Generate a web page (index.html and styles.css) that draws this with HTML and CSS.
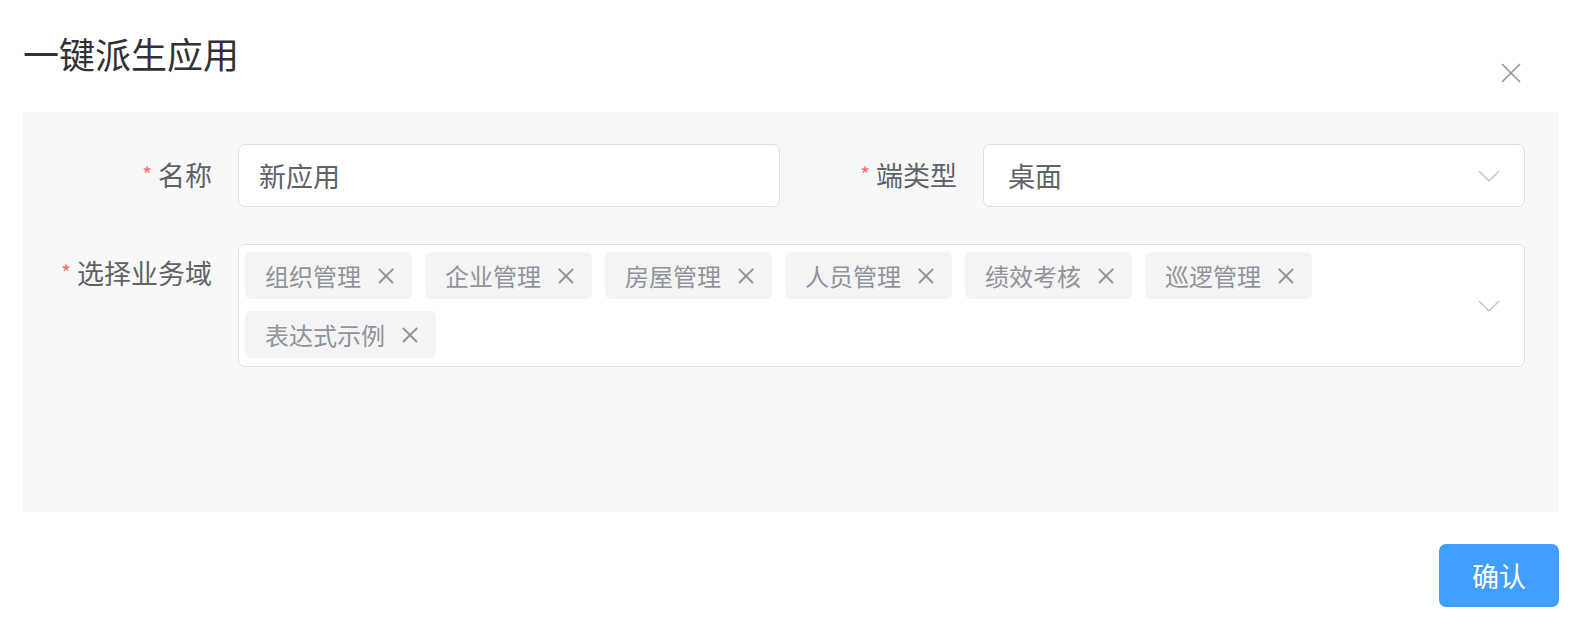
FILE: index.html
```html
<!DOCTYPE html>
<html>
<head>
  <meta charset="UTF-8">
  <title>一键派生应用</title>
  <link rel="stylesheet" href="styles.css">
</head>
<body>
  <div class="dialog">
    <header class="dialog-header">
      <h1 class="dialog-title">一键派生应用</h1>
      <button class="close-btn" aria-label="关闭">
        <svg width="20" height="20" viewBox="0 0 20 20"><path d="M1 1 L19 19 M19 1 L1 19" stroke="#909399" stroke-width="1.6" fill="none"/></svg>
      </button>
    </header>

    <main class="form-panel">
      <div class="form-row">
        <div class="form-item">
          <label class="form-label"><span class="req">*</span>名称</label>
          <div class="input">新应用</div>
        </div>
        <div class="form-item">
          <label class="form-label"><span class="req">*</span>端类型</label>
          <div class="input select">
            <span>桌面</span>
            <svg class="chevron" width="22" height="12" viewBox="0 0 22 12"><path d="M1 1 L11 11 L21 1" stroke="#c0c4cc" stroke-width="1.5" fill="none"/></svg>
          </div>
        </div>
      </div>

      <div class="form-row">
        <div class="form-item wide">
          <label class="form-label compact"><span class="req">*</span>选择业务域</label>
          <div class="multi-select">
            <div class="tags">
              <span class="tag">组织管理<i class="tag-close"></i></span>
              <span class="tag">企业管理<i class="tag-close"></i></span>
              <span class="tag">房屋管理<i class="tag-close"></i></span>
              <span class="tag">人员管理<i class="tag-close"></i></span>
              <span class="tag">绩效考核<i class="tag-close"></i></span>
              <span class="tag">巡逻管理<i class="tag-close"></i></span>
              <span class="tag">表达式示例<i class="tag-close"></i></span>
            </div>
            <svg class="chevron" width="22" height="12" viewBox="0 0 22 12"><path d="M1 1 L11 11 L21 1" stroke="#c0c4cc" stroke-width="1.5" fill="none"/></svg>
          </div>
        </div>
      </div>
    </main>

    <footer class="dialog-footer">
      <button class="btn-primary">确认</button>
    </footer>
  </div>
</body>
</html>
```

FILE: styles.css
```css
body {
  margin: 0;
  padding: 0;
  background-color: #fff;
  font-family: "Noto Sans CJK SC", "Noto Sans", sans-serif;
  color: #606266;
}

.dialog {
  padding: 0 27px 0 23px;
}

.dialog-header {
  display: flex;
  justify-content: space-between;
  align-items: flex-start;
  height: 112px;
}

.dialog-title {
  margin: 28px 0 0 0;
  font-size: 36px;
  line-height: 50px;
  font-weight: 400;
  color: #303133;
}

.close-btn {
  margin: 63px 38px 0 0;
  padding: 0;
  width: 20px;
  height: 20px;
  border: none;
  background: none;
  cursor: pointer;
}

.close-btn svg {
  display: block;
}

.form-panel {
  background-color: #f8f8f8;
  height: 400px;
  box-sizing: border-box;
  padding: 32px 34px 0 35px;
}

.form-row {
  display: flex;
  gap: 23px;
  margin-bottom: 36px;
}

.form-item {
  display: flex;
  align-items: flex-start;
  width: 722px;
}

.form-item.wide {
  width: 100%;
}

.form-label {
  flex: 0 0 180px;
  box-sizing: border-box;
  padding-right: 26px;
  text-align: right;
  font-size: 27px;
  line-height: 62px;
  color: #606266;
}

.form-label.compact {
  line-height: 58px;
}

.req {
  color: #f56c6c;
  font-size: 21px;
  margin-right: 6px;
  position: relative;
  top: -3px;
}

.input {
  flex: 1;
  height: 63px;
  box-sizing: border-box;
  border: 1px solid #dcdfe6;
  border-radius: 7px;
  background-color: #fff;
  padding: 0 20px;
  font-size: 27px;
  line-height: 61px;
  color: #606266;
}

.select {
  display: flex;
  justify-content: space-between;
  align-items: center;
  padding: 0 24px 0 24px;
}

.chevron {
  display: block;
  flex: none;
}

.multi-select {
  flex: 1;
  display: flex;
  align-items: center;
  box-sizing: border-box;
  min-height: 123px;
  border: 1px solid #dcdfe6;
  border-radius: 7px;
  background-color: #fff;
  padding: 7px 24px 6px 6px;
}

.tags {
  flex: 1;
  display: flex;
  flex-wrap: wrap;
  gap: 12px 13px;
  padding-right: 40px;
  align-self: flex-start;
}

.tag {
  display: inline-flex;
  align-items: center;
  gap: 17px;
  height: 47px;
  padding: 0 18px 0 20px;
  background-color: #f4f4f5;
  border-radius: 6px;
  font-size: 24px;
  color: #909399;
}

.tag-close {
  display: block;
  width: 16px;
  height: 16px;
  position: relative;
}

.tag-close::before,
.tag-close::after {
  content: "";
  position: absolute;
  left: -2px;
  top: 7px;
  width: 20px;
  height: 1.6px;
  background-color: #909399;
  transform: rotate(45deg);
}

.tag-close::after {
  transform: rotate(-45deg);
}

.dialog-footer {
  display: flex;
  justify-content: flex-end;
  padding-top: 32px;
}

.btn-primary {
  width: 120px;
  height: 63px;
  border: none;
  border-radius: 7px;
  background-color: #409eff;
  color: #fff;
  font-family: inherit;
  font-size: 27px;
  cursor: pointer;
}
```
